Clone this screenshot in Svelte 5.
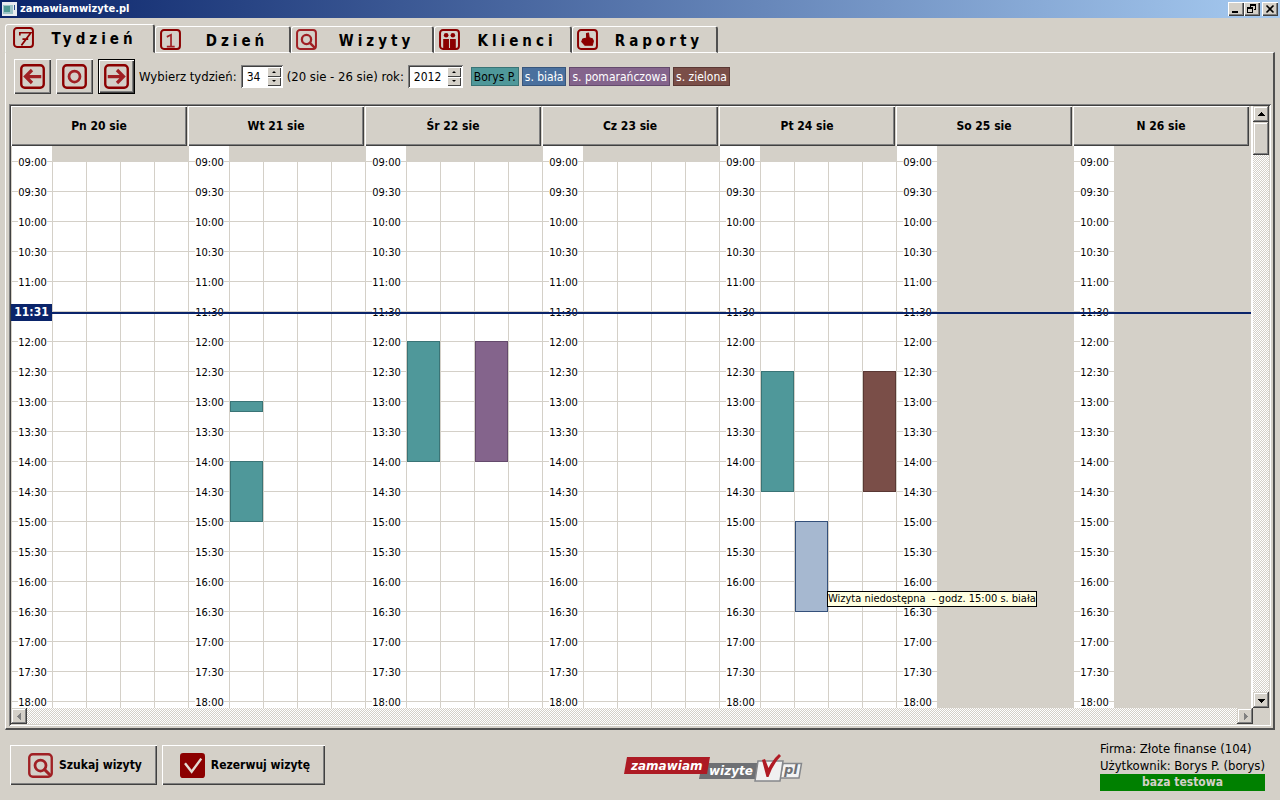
<script>
  const START = 9 * 60;

  const tabs = [
    { id: 'week', label: 'Tydzień', icon: 'seven' },
    { id: 'single', label: 'Dzień', icon: 'one' },
    { id: 'visits', label: 'Wizyty', icon: 'search' },
    { id: 'clients', label: 'Klienci', icon: 'people' },
    { id: 'reports', label: 'Raporty', icon: 'hand' }
  ];

  const resources = [
    { id: 'borys', label: 'Borys P.' },
    { id: 'biala', label: 's. biała' },
    { id: 'pomaranczowa', label: 's. pomarańczowa' },
    { id: 'zielona', label: 's. zielona' }
  ];

  const days = [
    { name: 'Pn 20 sie', open: true, visits: [] },
    {
      name: 'Wt 21 sie',
      open: true,
      visits: [
        { lane: 'borys', from: 13 * 60, length: 10 },
        { lane: 'borys', from: 14 * 60, length: 60 }
      ]
    },
    {
      name: 'Śr 22 sie',
      open: true,
      visits: [
        { lane: 'borys', from: 12 * 60, length: 120 },
        { lane: 'pomaranczowa', from: 12 * 60, length: 120 }
      ]
    },
    { name: 'Cz 23 sie', open: true, visits: [] },
    {
      name: 'Pt 24 sie',
      open: true,
      visits: [
        { lane: 'borys', from: 12 * 60 + 30, length: 120 },
        { lane: 'zielona', from: 12 * 60 + 30, length: 120 },
        { lane: 'biala', from: 15 * 60, length: 90, blocked: true, tip: 'Wizyta niedostępna \u00a0- godz. 15:00 s. biała' }
      ]
    },
    { name: 'So 25 sie', open: false, visits: [] },
    { name: 'N 26 sie', open: false, visits: [] }
  ];

  const pad = (n) => String(n).padStart(2, '0');
  const clock = (m) => `${pad(Math.floor(m / 60))}:${pad(m % 60)}`;
  const slots = Array.from({ length: 19 }, (_, i) => START + i * 30);

  const now = 11 * 60 + 31;
  // The current-time badge sits in the first day's gutter and replaces the label under it.
  const covered = (dayIndex, m) => dayIndex === 0 && Math.abs(m - now) < 10;

  let active = $state('week');
  let week = $state('34');
  let year = $state('2012');
</script>

{#snippet icon(kind, size)}
  <svg class="icon" width={size} height={size} viewBox="0 0 20 20" fill="none" aria-hidden="true">
    {#if kind === 'check'}
      <rect width="20" height="20" rx="2.5" fill="#8b0000" />
      <path d="M4 8.200 9.300 15 17 4.500" stroke="#e4dcd4" stroke-width="1.9" />
    {:else}
      <rect x="1" y="1" width="18" height="18" rx="2.800" stroke={kind === 'search' ? '#a02024' : '#8b0000'} stroke-width="1.9" />
      {#if kind === 'seven'}
        <path d="M6.500 8V5.500H17L8 17.500M9 11.500H14.500" stroke="#8b0000" stroke-width="1.600" />
      {:else if kind === 'one'}
        <path d="M6.500 7.500 10.500 5.500V17M6.500 16.800H14" stroke="#a02024" stroke-width="1.600" />
      {:else if kind === 'search'}
        <circle cx="10" cy="10" r="4.400" stroke="#a02024" stroke-width="2.200" />
        <path d="M12.500 12.500 18 18" stroke="#a02024" stroke-width="2.400" />
      {:else if kind === 'people'}
        <circle cx="6.800" cy="6" r="2.200" fill="#8b0000" />
        <circle cx="13.200" cy="6" r="2.200" fill="#8b0000" />
        <path d="M4 9.500H9.500V19H4ZM10.500 9.500H16V19H10.500Z" fill="#8b0000" />
      {:else if kind === 'hand'}
        <path d="M9 4.200 11 3.800 11.600 8.300 14.600 9.300 15.600 11.500 14.600 15.500H7.500L4.500 12 5.500 9.500 9.200 8.500Z" fill="#8b0000" stroke="#8b0000" stroke-linejoin="round" />
      {:else if kind === 'left'}
        <path d="M17 10H4.500M9.600 4.800 4.400 10l5.200 5.200" stroke="#a02024" stroke-width="2.600" />
      {:else if kind === 'right'}
        <path d="M3 10H15.500M10.400 4.800l5.200 5.200-5.200 5.200" stroke="#a02024" stroke-width="2.600" />
      {:else if kind === 'ring'}
        <circle cx="10" cy="10" r="4.400" stroke="#a02024" stroke-width="2.200" />
      {/if}
    {/if}
  </svg>
{/snippet}

{#snippet arrow(dir)}
  <svg class="arrow {dir}" width="7" height="7" viewBox="0 0 7 7" shape-rendering="crispEdges" aria-hidden="true">
    <path d="M3 1h1v1h1v1h1v1h1v1H0V4h1V3h1V2h1z" fill="currentColor" />
  </svg>
{/snippet}

<div class="window">
  <header class="titlebar">
    <svg width="15" height="14" viewBox="0 0 15 14" aria-hidden="true">
      <rect width="15" height="14" fill="#e8ecf0" />
      <rect x="1" y="3" width="10" height="9" fill="#9cc4c8" />
      <rect x="2" y="4" width="6" height="6" fill="#4f9a94" />
      <rect x="12" y="3" width="1" height="5" fill="#28508c" />
    </svg>
    <h1>zamawiamwizyte.pl</h1>
    <div class="winbuttons">
      <button aria-label="Minimalizuj">
        <svg width="12" height="10" shape-rendering="crispEdges"><path d="M2 7h6v2H2z" /></svg>
      </button>
      <button aria-label="Przywróć">
        <svg width="12" height="10" shape-rendering="crispEdges" fill="none" stroke="#000"><path d="M4.500 3V.5h5v5H8M4 1.500h6M1.500 3.500h5v5h-5zM1 4.500h6" /></svg>
      </button>
      <button class="close" aria-label="Zamknij">
        <svg width="12" height="10" fill="none" stroke="#000" stroke-width="1.600"><path d="M2.500 1.500l7 7M9.500 1.500l-7 7" /></svg>
      </button>
    </div>
  </header>

  <div class="tabs" role="tablist">
    {#each tabs as tab}
      <button class="tab {tab.id}" class:active={active === tab.id} role="tab" aria-selected={active === tab.id} onclick={() => (active = tab.id)}>
        {@render icon(tab.icon, 21)}
        <span>{tab.label}</span>
      </button>
    {/each}
  </div>

  <main class="panel">
    <div class="toolbar">
      <div class="navs">
        <button class="nav" aria-label="Poprzedni tydzień">{@render icon('left', 25)}</button>
        <button class="nav" aria-label="Bieżący tydzień">{@render icon('ring', 25)}</button>
        <button class="nav focused" aria-label="Następny tydzień">{@render icon('right', 25)}</button>
      </div>
      <label for="week">Wybierz tydzień:</label>
      <span class="spin">
        <input id="week" class="short" bind:value={week} />
        <span class="steps">
          <button aria-label="Następny" onclick={() => (week = String(+week + 1))}><i class="up"></i></button>
          <button aria-label="Poprzedni" onclick={() => (week = String(+week - 1))}><i class="down"></i></button>
        </span>
      </span>
      <label for="year">(20 sie - 26 sie) rok:</label>
      <span class="spin">
        <input id="year" bind:value={year} />
        <span class="steps">
          <button aria-label="Następny rok" onclick={() => (year = String(+year + 1))}><i class="up"></i></button>
          <button aria-label="Poprzedni rok" onclick={() => (year = String(+year - 1))}><i class="down"></i></button>
        </span>
      </span>
      <div class="chips">
        {#each resources as r}
          <button class="chip {r.id}">{r.label}</button>
        {/each}
      </div>
    </div>

    <section class="calendar">
      <div class="view">
        <div class="heads">
          {#each days as day}
            <button class="head">{day.name}</button>
          {/each}
        </div>
        <div class="body">
          {#each days as day, d}
            <div class="day">
              <ol class="hours">
                {#each slots as m}
                  <li>{#if !covered(d, m)}<span>{clock(m)}</span>{/if}</li>
                {/each}
              </ol>
              <div class="lanes" class:open={day.open}>
                {#if day.open}
                  {#each resources as r}
                    <div class="lane">
                      {#each day.visits.filter((v) => v.lane === r.id) as v}
                        <div class="visit {r.id}" class:blocked={v.blocked} style:top="{v.from - START}px" style:height="{v.length + 1}px">
                          {#if v.tip}<span class="tip" role="tooltip">{v.tip}</span>{/if}
                        </div>
                      {/each}
                    </div>
                  {/each}
                {/if}
              </div>
            </div>
          {/each}
          <div class="now" style:top="{now - START + 15}px"><time>{clock(now)}</time></div>
        </div>
      </div>
      <div class="vscroll">
        <button aria-label="Przewiń w górę">{@render arrow('up')}</button>
        <div class="thumb"></div>
        <button class="end" aria-label="Przewiń w dół">{@render arrow('down')}</button>
      </div>
      <div class="hscroll">
        <button aria-label="Przewiń w lewo" disabled>{@render arrow('left')}</button>
        <button class="end" aria-label="Przewiń w prawo" disabled>{@render arrow('right')}</button>
      </div>
    </section>
  </main>

  <footer>
    <div class="actions">
      <button class="action">{@render icon('search', 25)}Szukaj wizyty</button>
      <button class="action">{@render icon('check', 25)}Rezerwuj wizytę</button>
    </div>
    <svg class="logo" width="180" height="28" viewBox="0 0 180 28" role="img" aria-label="zamawiamwizyte.pl">
      <path d="M79 9H138L135 25H76Z" fill="#6e7074" />
      <path d="M4 3H87L84 20H1Z" fill="#ad1a24" />
      <text x="8" y="16" font-size="12">zamawiam</text>
      <text x="86" y="21" font-size="12">wizyte</text>
      <path d="M160 9.500H178.500L176 24H157Z" fill="#f4f4f4" stroke="#85878b" stroke-width="1.500" />
      <text x="161" y="20" font-size="13" class="pl">pl</text>
      <path d="M135 7H160L157 27H132Z" fill="#f0f0f0" stroke="#85878b" stroke-width="1.500" />
      <path d="M139 6L142 5L145.500 14Q150 5 156 0L158 2Q150 10 145.500 23H143.500Z" fill="#b01a24" />
    </svg>
    <div class="status">
      <div>Firma: Złote finanse (104)</div>
      <div>Użytkownik: Borys P. (borys)</div>
      <strong>baza testowa</strong>
    </div>
  </footer>
</div>

<style>
  :global(body) {
    margin: 0;
    background: #d4d0c8;
  }

  .window {
    display: flex;
    flex-direction: column;
    height: 100vh;
    overflow: hidden;
    background: #d4d0c8;
    color: #000;
    font: 12px/16px 'DejaVu Sans Condensed', 'DejaVu Sans', sans-serif;
  }

  button {
    box-sizing: border-box;
    margin: 0;
    padding: 0;
    border: 0;
    border-radius: 0;
    background: #d4d0c8;
    color: inherit;
    font: inherit;
    display: flex;
    align-items: center;
    justify-content: center;
  }

  svg {
    display: block;
    flex: none;
  }

  .titlebar {
    display: flex;
    align-items: center;
    gap: 3px;
    height: 18px;
    flex: none;
    padding: 0 2px;
    background: linear-gradient(90deg, #0a246a, #a6caf0);
    color: #fff;
  }

  h1 {
    margin: 0;
    font-size: 11px;
    font-weight: bold;
  }

  .winbuttons {
    display: flex;
    margin-left: auto;
  }

  .winbuttons button {
    width: 16px;
    height: 14px;
    box-shadow: inset 1px 1px #fff, inset -1px -1px #404040, inset -2px -2px #808080;
  }

  .winbuttons .close {
    margin-left: 2px;
  }

  .tabs {
    display: flex;
    align-items: flex-end;
    height: 35px;
    flex: none;
    padding: 0 5px;
    position: relative;
    z-index: 1;
  }

  .tab {
    height: 27px;
    padding: 0 4px;
    border-top: 1px solid #fff;
    border-left: 1px solid #fff;
    border-right: 2px solid #505050;
    border-bottom: 1px solid #fff;
    border-radius: 3px 3px 0 0;
    font-size: 15px;
    font-weight: bold;
    letter-spacing: 4px;
  }

  .tab span {
    flex: 1;
    padding: 2px 0 0 8px;
    text-align: center;
  }

  .tab.active {
    height: 29px;
    border-bottom-color: #d4d0c8;
    padding: 0 7px 2px;
  }

  .tab.week { min-width: 150px; }
  .tab.single { min-width: 136px; }
  .tab.visits { min-width: 143px; }
  .tab.clients { min-width: 138px; }
  .tab.reports { min-width: 146px; }

  .panel {
    display: flex;
    flex-direction: column;
    flex: 1;
    min-height: 0;
    margin: -1px 5px 0;
    padding: 6px 2px 2px 3px;
    border: 1px solid #fff;
    border-right: 2px solid #505050;
    border-bottom: 2px solid #505050;
  }

  .toolbar {
    display: flex;
    align-items: center;
    gap: 4px;
    height: 35px;
    flex: none;
    padding-left: 5px;
    margin-bottom: 10px;
    font-size: 13px;
  }

  .navs {
    display: flex;
    gap: 5px;
  }

  .nav {
    width: 37px;
    height: 35px;
    box-shadow: inset 1px 1px #fff, inset -1px -1px #404040, inset -2px -2px #808080;
  }

  .nav.focused {
    border: 1px solid #000;
  }

  .spin {
    display: flex;
    height: 23px;
    box-sizing: border-box;
    padding: 2px;
    background: #fff;
    box-shadow: inset 1px 1px #808080, inset -1px -1px #fff, inset 2px 2px #404040;
  }

  .spin input {
    box-sizing: border-box;
    width: 37px;
    padding: 0 0 0 4px;
    border: 0;
    background: transparent;
    font: inherit;
    font-size: 12px;
    outline: 0;
  }

  .spin .short {
    width: 24px;
  }

  .steps {
    display: flex;
    flex-direction: column;
    width: 14px;
  }

  .steps button {
    flex: 1;
    min-height: 0;
    box-shadow: inset 1px 1px #fff, inset -1px -1px #404040;
  }

  .steps i {
    border: 2px solid transparent;
  }

  .steps .up {
    border-top: 0;
    border-bottom-color: #000;
  }

  .steps .down {
    border-bottom: 0;
    border-top-color: #000;
  }

  .chips {
    display: flex;
    gap: 3px;
    margin-left: 4px;
  }

  .chip {
    height: 19px;
    padding: 0 2px;
    font-size: 12px;
    border: 1px solid;
    color: #fff;
  }

  .borys { background: #4f989a; border-color: #3a7476; }
  .biala { background: #4a709e; border-color: #38567c; }
  .pomaranczowa { background: #84648c; border-color: #644a6c; }
  .zielona { background: #7a4e48; border-color: #5a3834; }
  .chip.borys { color: #000; }

  .calendar {
    display: grid;
    grid-template: minmax(0, 1fr) 16px / minmax(0, 1fr) 16px;
    flex: 1;
    min-height: 0;
    padding: 2px;
    box-shadow: inset 1px 1px #808080, inset -1px -1px #fff, inset 2px 2px #404040;
  }

  .view {
    display: flex;
    flex-direction: column;
    min-height: 0;
    border-right: 2px solid #fff;
  }

  .heads,
  .body {
    display: grid;
    grid-template-columns: repeat(7, minmax(0, 1fr));
  }

  .heads {
    height: 40px;
    flex: none;
    margin-right: 1px;
  }

  .head {
    font-weight: bold;
    margin-right: 1px;
    box-shadow: inset 1px 1px #fff, inset -1px -1px #404040, inset -2px -2px #808080;
  }

  .body {
    flex: 1;
    min-height: 0;
    position: relative;
    overflow: hidden;
    grid-template-rows: 100%;
    padding-left: 1px;
  }

  .day {
    display: grid;
    grid-template-columns: 40px minmax(0, 1fr);
    font-size: 11px;
  }

  .hours {
    margin: 0;
    padding: 0;
    list-style: none;
    min-height: 100%;
    background: repeating-linear-gradient(#fff 0 15px, #d4d0c8 15px 16px, #fff 16px 30px);
  }

  .hours li {
    box-sizing: border-box;
    display: flex;
    align-items: center;
    justify-content: center;
    height: 30px;
    padding: 4px 0 0 1px;
    line-height: 14px;
  }

  .hours span {
    background: #fff;
  }

  .lanes {
    display: grid;
    grid-template-columns: repeat(4, minmax(0, 1fr));
    margin-top: 15px;
  }

  .lanes.open {
    border-right: 1px solid #d4d0c8;
    background: repeating-linear-gradient(#d4d0c8 0 1px, #fff 1px 30px);
  }

  .lane {
    position: relative;
    border-left: 1px solid #d4d0c8;
  }

  .visit {
    position: absolute;
    left: 0;
    right: 0;
    box-sizing: border-box;
    border-width: 1px;
    border-style: solid;
  }

  .visit.blocked {
    background: #a6b8d0;
    border-color: #34507a;
    z-index: 2;
  }

  .tip {
    position: absolute;
    left: 31px;
    bottom: 4px;
    border: 1px solid #000;
    background: #ffffe1;
    line-height: 14px;
    white-space: nowrap;
  }

  .now {
    position: absolute;
    left: 0;
    right: 0;
    height: 2px;
    display: flex;
    align-items: center;
    background: #0a246a;
    z-index: 1;
  }

  .now time {
    width: 41px;
    margin-bottom: 1px;
    background: #0a246a;
    color: #fff;
    font-weight: bold;
    line-height: 17px;
    text-align: center;
  }

  .vscroll,
  .hscroll {
    display: flex;
    background: repeating-conic-gradient(#fff 0 25%, #d4d0c8 0 50%) 0 0 / 2px 2px;
  }

  .vscroll {
    flex-direction: column;
  }

  .vscroll button,
  .hscroll button,
  .thumb {
    width: 16px;
    height: 16px;
    flex: none;
    background: #d4d0c8;
    box-shadow: inset -1px -1px #404040, inset 1px 1px #d4d0c8, inset -2px -2px #808080, inset 2px 2px #fff;
  }

  .thumb {
    height: 33px;
  }

  .vscroll .end {
    margin-top: auto;
  }

  .hscroll .end {
    margin-left: auto;
  }

  .hscroll button {
    color: #808080;
  }

  .arrow.down { transform: rotate(180deg); }
  .arrow.left { transform: rotate(-90deg); }
  .arrow.right { transform: rotate(90deg); }

  footer {
    display: grid;
    grid-template-columns: auto 1fr auto;
    align-items: center;
    height: 70px;
    flex: none;
    padding: 0 15px 0 10px;
  }

  .actions {
    display: flex;
    gap: 5px;
  }

  .action {
    height: 40px;
    gap: 6px;
    padding: 0 15px 0 18px;
    font-weight: bold;
    box-shadow: inset 1px 1px #fff, inset -1px -1px #404040, inset -2px -2px #808080;
  }

  .logo {
    justify-self: center;
    margin-top: 6px;
  }

  .logo text {
    fill: #fff;
    font-family: 'DejaVu Sans', sans-serif;
    font-weight: bold;
    font-style: italic;
  }

  .logo .pl {
    fill: #6e7074;
  }

  .status {
    font-size: 13px;
    line-height: 17px;
  }

  .status strong {
    display: block;
    background: #008000;
    color: #d4d0c8;
    font-size: 12px;
    text-align: center;
  }
</style>
